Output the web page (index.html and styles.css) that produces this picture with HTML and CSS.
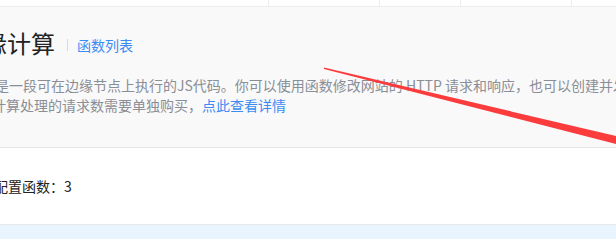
FILE: index.html
```html
<!DOCTYPE html>
<html lang="zh-CN">
<head>
    <meta charset="UTF-8">
    <meta name="viewport" content="width=device-width, initial-scale=1.0">
    <title>边缘计算</title>
    <link rel="stylesheet" href="styles.css">
</head>
<body>
    <div class="tabs">
        <span class="tab tab-a"></span>
        <span class="tab tab-b"></span>
        <span class="tab tab-c"></span>
        <span class="tab tab-b"></span>
        <span class="tab tab-end"></span>
    </div>

    <div class="header">
        <div class="inner">
            <div class="title-row">
                <h1 class="title">边缘计算</h1>
                <span class="sep"></span>
                <a class="link" href="#">函数列表</a>
            </div>
            <p class="desc"><span class="line line-1">函数是一段可在边缘节点上执行的JS代码。你可以使用函数修改网站的 HTTP 请求和响应，也可以创建并发送新的请求并返回响应。</span><span class="line line-2">边缘计算处理的请求数需要单独购买，<a class="link" href="#">点此查看详情</a></span></p>
        </div>
    </div>

    <div class="summary">
        <span class="count">已配置函数：3</span>
    </div>

    <div class="notice"></div>

    <!-- annotation arrow drawn over the screenshot -->
    <svg class="arrow" width="616" height="239" viewBox="0 0 616 239">
        <polygon points="324,67.5 616,136 616,144 324,69" fill="#fb3c3c"/>
    </svg>
</body>
</html>
```

FILE: styles.css
```css
html, body { margin: 0; padding: 0; }
body {
    width: 616px;
    height: 239px;
    overflow: hidden;
    position: relative;
    background: #fff;
    font-family: "Noto Sans CJK SC", "Noto Sans", sans-serif;
    color: #333;
}

.tabs { display: flex; height: 6px; border-bottom: 1px solid #ececec; background: #fff; }
.tab { flex: none; height: 6px; border-right: 1px solid #ececec; }
.tab-a { width: 268px; }
.tab-b { width: 110px; }
.tab-c { width: 80px; }
.tab-end { flex: 1; border-right: none; }

.header { height: 141px; background: #f9f9f9; border-bottom: 1px solid #e6e6e6; box-sizing: border-box; }
.inner { margin-left: -34px; padding-top: 21px; white-space: nowrap; }

.title-row { display: flex; align-items: center; height: 30px; }
.title { margin: 0 0 0 -7px; font-size: 24px; font-weight: 400; line-height: 30px; color: #222; }
.sep { width: 1px; height: 12px; background: #d5d9e0; margin: 4px 9px 0 12px; }
.link { color: #3b8cf2; text-decoration: none; font-size: 14px; }
.title-row .link { margin-top: 4px; }

.desc { margin: 17px 0 0; font-size: 14px; line-height: 20px; color: #8a8e96; }
.line { display: block; }
.line-1 { margin-left: 1px; }
.line-2 { margin-left: -2px; }

.summary { height: 77px; display: flex; align-items: center; border-bottom: 1px solid #e6e9ee; box-sizing: border-box; }
.count { margin-left: -20px; font-size: 14px; line-height: 20px; color: #222; }

.notice { height: 20px; background: #e9f5fe; }

.arrow { position: absolute; left: 0; top: 0; pointer-events: none; }
```
